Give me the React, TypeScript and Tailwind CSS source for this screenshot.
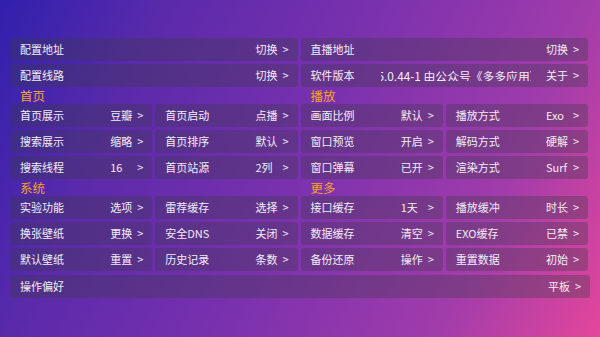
import React from "react";

type Item = { label: string; value: string };

const Arrow = () => (
  <span className="w-[6px] text-[11px] leading-none">&gt;</span>
);

function Cell({ label, value, className = "" }: { label: string; value: string; className?: string }) {
  return (
    <div
      className={`h-[23px] flex items-center justify-between pl-[10px] pr-[9px] rounded-[3px] bg-[rgba(60,60,70,0.34)] ${className}`}
    >
      <span className="text-[11px] leading-none whitespace-nowrap">{label}</span>
      <div className="flex items-center">
        <span className="w-[27px] text-[11px] leading-none whitespace-nowrap">{value}</span>
        <Arrow />
      </div>
    </div>
  );
}

function Header({ left, right }: { left: string; right: string }) {
  return (
    <div className="h-[17px] grid grid-cols-2 gap-x-[3px] w-[578px]">
      <div className="pl-[10px] text-[12.5px] leading-[17px] text-[#f5a623]">{left}</div>
      <div className="pl-[10px] text-[12.5px] leading-[17px] text-[#f5a623]">{right}</div>
    </div>
  );
}

function Grid({ items }: { items: Item[] }) {
  return (
    <div className="grid grid-cols-4 gap-[3px] w-[578px]">
      {items.map((it, i) => (
        <Cell key={i} label={it.label} value={it.value} />
      ))}
    </div>
  );
}

export default function App() {
  const sec1: Item[] = [
    { label: "首页展示", value: "豆瓣" },
    { label: "首页启动", value: "点播" },
    { label: "画面比例", value: "默认" },
    { label: "播放方式", value: "Exo" },
    { label: "搜索展示", value: "缩略" },
    { label: "首页排序", value: "默认" },
    { label: "窗口预览", value: "开启" },
    { label: "解码方式", value: "硬解" },
    { label: "搜索线程", value: "16" },
    { label: "首页站源", value: "2列" },
    { label: "窗口弹幕", value: "已开" },
    { label: "渲染方式", value: "Surf" },
  ];
  const sec2: Item[] = [
    { label: "实验功能", value: "选项" },
    { label: "雷荐缓存", value: "选择" },
    { label: "接口缓存", value: "1天" },
    { label: "播放缓冲", value: "时长" },
    { label: "换张壁纸", value: "更换" },
    { label: "安全DNS", value: "关闭" },
    { label: "数据缓存", value: "清空" },
    { label: "EXO缓存", value: "已禁" },
    { label: "默认壁纸", value: "重置" },
    { label: "历史记录", value: "条数" },
    { label: "备份还原", value: "操作" },
    { label: "重置数据", value: "初始" },
  ];

  return (
    <div
      className="w-[600px] h-[337px] overflow-hidden pt-[38px] pl-[10px] text-[#f1eef6] bg-[linear-gradient(115deg,#3020ad_0%,#5a2aab_22%,#7a31ae_50%,#a13cab_78%,#e4469b_100%)]"
      style={{ fontFamily: '"Noto Sans CJK SC", "Noto Sans", sans-serif' }}
    >
      <div className="grid grid-cols-2 gap-[3px] w-[578px]">
        <Cell label="配置地址" value="切换" />
        <Cell label="直播地址" value="切换" />
        <Cell label="配置线路" value="切换" />
        <div className="h-[23px] flex items-center pl-[10px] pr-[9px] rounded-[3px] bg-[rgba(60,60,70,0.34)]">
          <span className="w-[70px] shrink-0 text-[11px] leading-none whitespace-nowrap">软件版本</span>
          <div className="w-[150px] shrink-0 overflow-hidden">
            <span className="block ml-[-3px] text-[11.8px] leading-none whitespace-nowrap">
              5.0.44-1 由公众号《多多应用》提供
            </span>
          </div>
          <div className="ml-auto flex items-center">
            <span className="w-[27px] text-[11px] leading-none whitespace-nowrap">关于</span>
            <Arrow />
          </div>
        </div>
      </div>
      <Header left="首页" right="播放" />
      <Grid items={sec1} />
      <Header left="系统" right="更多" />
      <Grid items={sec2} />
      <div className="mt-[4px] w-[580px]">
        <Cell label="操作偏好" value="平板" />
      </div>
    </div>
  );
}
